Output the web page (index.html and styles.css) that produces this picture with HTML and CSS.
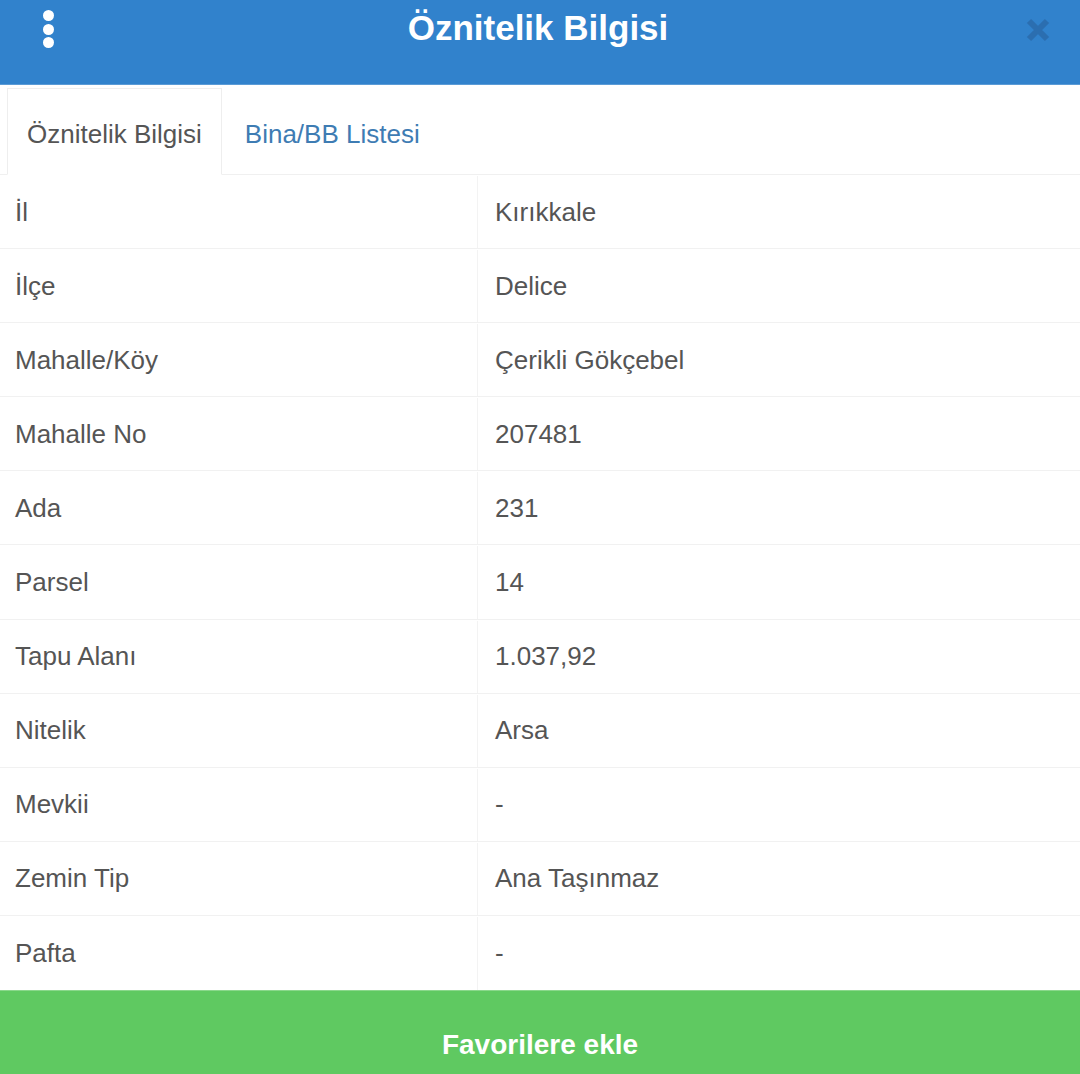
FILE: index.html
```html
<!DOCTYPE html>
<html lang="tr">
<head>
<meta charset="utf-8">
<title>Öznitelik Bilgisi</title>
<link rel="stylesheet" href="styles.css">
</head>
<body>
<div class="app">
  <header class="topbar">
    <div class="menu">
      <span class="dot"></span><span class="dot"></span><span class="dot"></span>
    </div>
    <h1 class="title">Öznitelik Bilgisi</h1>
    <div class="close">
      <svg width="26" height="26" viewBox="0 0 26 26"><path d="M4 4 L22 22 M22 4 L4 22" stroke="#2b6cae" stroke-width="6" stroke-linecap="butt"/></svg>
    </div>
  </header>
  <nav class="tabs">
    <div class="tab active">Öznitelik Bilgisi</div>
    <div class="tab">Bina/BB Listesi</div>
  </nav>
  <div class="rows">
    <div class="row"><div class="label">İl</div><div class="value">Kırıkkale</div></div>
    <div class="row"><div class="label">İlçe</div><div class="value">Delice</div></div>
    <div class="row"><div class="label">Mahalle/Köy</div><div class="value">Çerikli Gökçebel</div></div>
    <div class="row"><div class="label">Mahalle No</div><div class="value">207481</div></div>
    <div class="row"><div class="label">Ada</div><div class="value">231</div></div>
    <div class="row"><div class="label">Parsel</div><div class="value">14</div></div>
    <div class="row"><div class="label">Tapu Alanı</div><div class="value">1.037,92</div></div>
    <div class="row"><div class="label">Nitelik</div><div class="value">Arsa</div></div>
    <div class="row"><div class="label">Mevkii</div><div class="value">-</div></div>
    <div class="row"><div class="label">Zemin Tip</div><div class="value">Ana Taşınmaz</div></div>
    <div class="row"><div class="label">Pafta</div><div class="value">-</div></div>
  </div>
  <button class="fav">Favorilere ekle</button>
</div>
</body>
</html>
```
FILE: styles.css
```css
html, body {
  margin: 0;
  padding: 0;
  background: #ffffff;
  overflow: hidden;
}
body {
  font-family: "Liberation Sans", Arial, sans-serif;
  color: #555555;
}
.app {
  width: 1080px;
  height: 1074px;
  display: flex;
  flex-direction: column;
}
.topbar {
  height: 85px;
  box-sizing: border-box;
  background: #3182cc;
  border-bottom: 1px solid #5b9bd6;
  display: grid;
  grid-template-columns: 96px 1fr 100px;
  align-items: start;
}
.menu {
  height: 58px;
  display: flex;
  flex-direction: column;
  align-items: center;
  justify-content: center;
  gap: 2.5px;
}
.dot {
  width: 11px;
  height: 11px;
  border-radius: 50%;
  background: #ffffff;
}
.title {
  margin: 0;
  height: 58px;
  line-height: 56px;
  text-align: center;
  color: #ffffff;
  font-size: 35px;
  font-weight: bold;
}
.close {
  height: 60px;
  display: flex;
  align-items: center;
  justify-content: flex-start;
  padding-left: 45px;
  opacity: 0.9;
}
.tabs {
  display: flex;
  padding: 3px 0 0 7px;
  border-bottom: 1px solid #f0f0f0;
}
.tab {
  padding: 0 19px;
  height: 86px;
  line-height: 90px;
  font-size: 26px;
  color: #3e7cb3;
  box-sizing: border-box;
  border: 1px solid transparent;
}
.tab.active {
  color: #555555;
  border-color: #eeeeee;
  border-bottom-color: #ffffff;
  margin-bottom: -1px;
  height: 87px;
  background: #ffffff;
}
.tab + .tab {
  margin-left: 3px;
}
.rows {
  display: flex;
  flex-direction: column;
}
.row {
  display: grid;
  grid-template-columns: 477px 1fr;
  height: 74.1px;
  border-bottom: 1px solid #f1f1f1;
  box-sizing: border-box;
  font-size: 26px;
  padding-top: 1px;
}
.row:last-child {
  border-bottom: none;
}
.label {
  padding-left: 15px;
  display: flex;
  align-items: center;
}
.value {
  padding-left: 17px;
  display: flex;
  align-items: center;
  border-left: 1px solid #f3f3f3;
}
.fav {
  margin-top: auto;
  height: 84px;
  width: 100%;
  border: none;
  border-top: 1px solid #8ad88b;
  background: #5fc961;
  color: #ffffff;
  font-family: "Liberation Sans", Arial, sans-serif;
  font-size: 28px;
  font-weight: bold;
  padding: 25px 0 0;
  line-height: 36px;
  box-sizing: border-box;
}
```
